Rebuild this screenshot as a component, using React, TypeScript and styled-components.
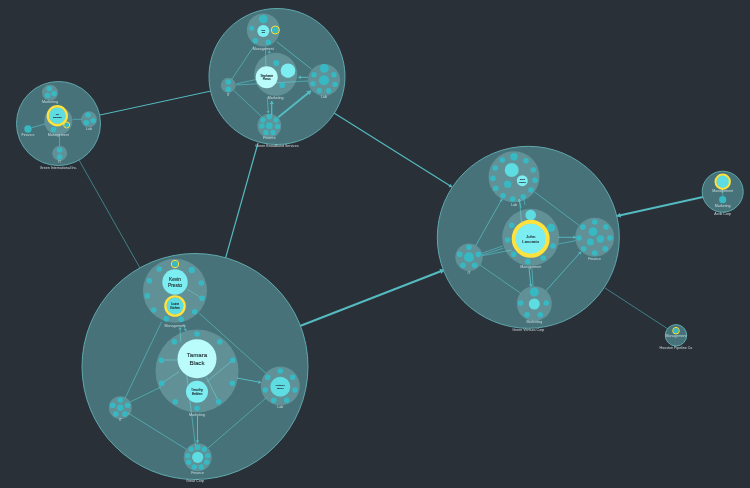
import styled, {createGlobalStyle} from 'styled-components';

const GlobalStyle = createGlobalStyle`
    html, body {
        margin: 0;
        background-color: #2A3038;
    }
`

const Page = styled.div`
    width: 750px;
    height: 488px;
    overflow: hidden;
    background-color: #2A3038;
`

const Chart = styled.svg`
    display: block;
    width: 750px;
    height: 488px;
    filter: blur(0.35px);
    font-family: "Liberation Sans", Arial, sans-serif;
`

const ClusterCircle = styled.circle`
    fill: #47727A;
    stroke: #5FA9AD;
    stroke-width: 1;
`

const GroupCircle = styled.circle`
    fill: #A6E4E2;
    fill-opacity: 0.28;
`

const Node = styled.circle<{$tone: Tone}>`
    fill: ${({$tone}) => toneColors[$tone]};
`

const Ring = styled.circle<{$width: number}>`
    fill: none;
    stroke: #FFE23D;
    stroke-width: ${({$width}) => $width};
`

const Link = styled.line<{$width: number, $dim?: boolean}>`
    stroke: ${({$dim}) => $dim ? '#3E8086' : '#54BBC0'};
    stroke-width: ${({$width}) => $width};
`

const Arrow = styled.polygon<{$dim?: boolean}>`
    fill: ${({$dim}) => $dim ? '#3E8086' : '#54BBC0'};
`

const Label = styled.text<{$size?: number}>`
    fill: #C9DEDE;
    font-size: ${({$size}) => $size ?? 3.6}px;
    text-anchor: middle;
`

const NodeName = styled.text<{$size: number}>`
    fill: #1E2B30;
    stroke: #1E2B30;
    stroke-width: 0.12;
    font-size: ${({$size}) => $size}px;
    text-anchor: middle;
`

type Tone = 'small' | 'mid' | 'bright' | 'pale'
type Point = [number, number]

const toneColors: Record<Tone, string> = {
    small: '#37B9C4',
    mid: '#5DDCE2',
    bright: '#7CEDF1',
    pale: '#BAFCFC',
}

interface DotProps {
    at: Point
    r?: number
    tone?: Tone
    ring?: number
    ringR?: number
    name?: string[]
    nameSize?: number
}

interface GroupProps {
    at: Point
    r: number
    label: string
    labelY: number
    dots: DotProps[]
}

interface ClusterProps {
    at: Point
    r: number
    label: string
    labelY: number
    links: LinkProps[]
    groups: GroupProps[]
}

interface LinkProps {
    from: Point
    to: Point
    width?: number
    arrow?: boolean
    dim?: boolean
}

const small = (points: Point[], r = 2.8): DotProps[] => points.map(at => ({at, r}))

const clusters: ClusterProps[] = [
    {
        at: [58.5, 123.5], r: 42, label: 'Green International Inc.', labelY: 169,
        links: [
            {from: [31.7, 127.7], to: [45, 124], width: 0.7},
            {from: [72.7, 119.3], to: [81.7, 119.3], width: 0.7},
            {from: [59.5, 135], to: [59.5, 146], width: 0.7},
        ],
        groups: [
            {at: [50, 92.7], r: 8, label: 'Marketing', labelY: 103, dots: small([[49.3, 88.7], [54, 93.7], [47.5, 95.5]])},
            {
                at: [58.3, 121], r: 14, label: 'Management', labelY: 136.2, dots: [
                    {at: [53.5, 129.5], r: 2.8},
                    {at: [57.3, 115.7], r: 8.4, tone: 'mid', ring: 2.4, ringR: 9.5, name: ['Jim', 'Schwieger'], nameSize: 1.9},
                    {at: [66.7, 125], r: 2.6, ring: 0.9, ringR: 3},
                ],
            },
            {at: [89, 119.3], r: 8, label: 'Lab', labelY: 130, dots: small([[88, 115], [93.3, 120.7], [86.3, 122.7]])},
            {at: [28, 129], r: 0, label: 'Finance', labelY: 136, dots: [{at: [28, 129], r: 3.7}]},
            {at: [59.7, 153.3], r: 7.5, label: 'IT', labelY: 163, dots: small([[59.7, 150], [59.7, 157]])},
        ],
    },
    {
        at: [277, 76.5], r: 68, label: 'Green Broadband Services', labelY: 147,
        links: [
            {from: [276.7, 41.7], to: [311.7, 69.3], width: 0.8},
            {from: [254, 46], to: [231.7, 79.3], width: 0.7},
            {from: [234, 90.7], to: [261.7, 116.7], width: 0.7},
            {from: [236, 84], to: [257, 79.3], width: 0.7},
            {from: [236, 85], to: [308, 81], width: 0.7},
            {from: [308, 77.3], to: [298.3, 77.3], width: 1, arrow: true},
            {from: [278.3, 117.3], to: [311, 90.7], width: 2, arrow: true},
            {from: [271.7, 115], to: [271.7, 101], width: 1.3, arrow: true},
            {from: [267.3, 97], to: [268.3, 113.3], width: 0.7, arrow: true},
            {from: [265.5, 46.7], to: [265.8, 66.7], width: 0.7},
            {from: [269.3, 53.3], to: [269.3, 50.7], width: 0.7, arrow: true},
        ],
        groups: [
            {
                at: [263.3, 30], r: 16.5, label: 'Management', labelY: 50, dots: [
                    {at: [263.3, 19], r: 4.3},
                    {at: [251.7, 28.3], r: 2.5},
                    {at: [263.3, 31], r: 6, tone: 'bright', name: ['Carol', 'Clair'], nameSize: 1.6},
                    {at: [275.3, 30], r: 3.2, ring: 1, ringR: 4},
                    {at: [255.3, 40.7], r: 2.8},
                    {at: [268.3, 42.3], r: 2.8},
                ],
            },
            {
                at: [275.7, 74.3], r: 21.5, label: 'Marketing', labelY: 99, dots: [
                    {at: [276.3, 63], r: 3},
                    {at: [282.3, 85.3], r: 2.8},
                    {at: [288, 70.7], r: 7.3, tone: 'bright'},
                    {at: [266.7, 77.3], r: 11, tone: 'pale', name: ['Stephanie', 'Panus'], nameSize: 2.8},
                ],
            },
            {
                at: [324, 80], r: 16, label: 'Lab', labelY: 98, dots: [
                    {at: [324.3, 68.3], r: 4.4},
                    {at: [324, 80.3], r: 5},
                    ...small([[314, 74.7], [334, 74.7], [313, 83.7], [335, 84.3], [319.3, 90.7], [328.7, 90.7]], 2.6),
                ],
            },
            {at: [228.3, 85.3], r: 7.5, label: 'IT', labelY: 96, dots: small([[228.3, 82], [228.3, 89.3]])},
            {
                at: [269.3, 125.7], r: 12, label: 'Finance', labelY: 139, dots: [
                    {at: [269.3, 125.7], r: 3.4},
                    ...small([[269.3, 116.7], [263, 120], [276, 120], [262, 126], [277.5, 126.5], [266, 132.5], [273, 132.5]], 2.7),
                ],
            },
        ],
    },
    {
        at: [195, 366.5], r: 113, label: 'Great Corp', labelY: 482,
        links: [
            {from: [161.7, 321.7], to: [125, 398.3], width: 0.7},
            {from: [199.3, 313.3], to: [266, 373.3], width: 0.7},
            {from: [128, 413], to: [186, 449], width: 0.7},
            {from: [208, 448], to: [266, 398], width: 0.7},
            {from: [130, 402], to: [161, 387], width: 0.7},
            {from: [237, 378], to: [261, 382.5], width: 1, arrow: true},
            {from: [196, 450], to: [186.7, 375], width: 0.7},
            {from: [197.5, 416], to: [197.5, 443], width: 1, arrow: true},
            {from: [180, 360], to: [162, 360], width: 0.7},
            {from: [179, 371.7], to: [161.7, 383.3], width: 0.7},
            {from: [206, 376.7], to: [218.7, 401.7], width: 0.7},
            {from: [206.7, 381.7], to: [232.7, 360.3], width: 0.7},
            {from: [180.7, 341.7], to: [180, 327.3], width: 0.7, arrow: true},
            {from: [187.3, 289.3], to: [202, 298.3], width: 0.6},
            {from: [183, 324], to: [186, 331], width: 0.7, arrow: true},
        ],
        groups: [
            {
                at: [175, 290.7], r: 32, label: 'Management', labelY: 327, dots: [
                    ...small([[159.3, 269], [149.3, 280.7], [201.3, 283], [147.3, 295.7], [202, 298.3], [153.7, 310], [194.7, 311.7], [166.3, 318.7], [181.3, 319.3]]),
                    {at: [191.7, 270], r: 3.2},
                    {at: [175, 264], r: 3, ring: 1, ringR: 3.7},
                    {at: [175, 282], r: 12.7, tone: 'bright', name: ['Kevin', 'Presto'], nameSize: 4.8},
                    {at: [175, 306], r: 8.6, tone: 'mid', ring: 2.4, ringR: 9.6, name: ['Louise', 'Kitchen'], nameSize: 2.8},
                ],
            },
            {
                at: [197, 371], r: 41.5, label: 'Marketing', labelY: 415.5, dots: [
                    ...small([[197, 334], [174.3, 341.7], [219.7, 341.7], [161.3, 360.3], [232.7, 360.3], [161.7, 383.3], [232.3, 383.3], [175.3, 401.7], [218.7, 401.7], [197, 408.3]]),
                    {at: [197, 358.7], r: 19.5, tone: 'pale', name: ['Tamara', 'Black'], nameSize: 6.2},
                    {at: [197, 391.7], r: 11, tone: 'bright', name: ['Timothy', 'Belden'], nameSize: 3.4},
                ],
            },
            {
                at: [280.3, 386], r: 19.5, label: 'Lab', labelY: 408, dots: [
                    ...small([[280.3, 371], [267.7, 377.3], [292.7, 377.3], [265.3, 390], [295, 390], [273.7, 400.3], [286.7, 400.3]]),
                    {at: [280.3, 386.7], r: 10, tone: 'mid', name: ['Fletcher', 'Sturm'], nameSize: 2.5},
                ],
            },
            {
                at: [120.3, 407.7], r: 11.5, label: 'IT', labelY: 421, dots: [
                    ...small([[120.3, 400], [112.7, 405.3], [127.7, 405.3], [115.7, 414], [125, 414]]),
                    {at: [120.3, 407.7], r: 3.2},
                ],
            },
            {
                at: [197.7, 457.3], r: 14, label: 'Finance', labelY: 474, dots: [
                    {at: [197.7, 457.3], r: 5.6, tone: 'mid'},
                    ...small([[197.7, 447.3], [191.3, 449.3], [204.3, 449.3], [187.7, 455.7], [207.7, 455.7], [188.7, 462.3], [206.7, 462.3], [194.3, 467], [201.3, 467]], 2.7),
                ],
            },
        ],
    },
    {
        at: [528.3, 237.3], r: 91, label: 'Green Ventura Corp', labelY: 331,
        links: [
            {from: [475.7, 245.7], to: [502, 199], width: 0.8, arrow: true},
            {from: [535, 192.3], to: [579, 225.3], width: 0.7},
            {from: [481.7, 253.3], to: [502.7, 246], width: 0.7},
            {from: [482, 255], to: [503.3, 248.3], width: 0.7},
            {from: [482.3, 255.7], to: [511.7, 250], width: 0.7},
            {from: [480, 265], to: [520.7, 293.3], width: 0.7},
            {from: [546, 290.7], to: [581, 251.7], width: 0.9, arrow: true},
            {from: [558.3, 237.3], to: [575.7, 237.3], width: 0.9, arrow: true},
            {from: [558.3, 244], to: [575.7, 240.7], width: 0.7},
            {from: [529, 268.3], to: [531, 286.7], width: 1, arrow: true},
            {from: [532, 268.3], to: [533, 286], width: 0.7},
            {from: [521, 208], to: [519, 199], width: 1, arrow: true},
            {from: [525, 205], to: [523, 195], width: 0.7},
            {from: [519.5, 200], to: [521.5, 222], width: 0.7},
        ],
        groups: [
            {
                at: [514, 176.7], r: 25.5, label: 'Lab', labelY: 206, dots: [
                    ...small([[502.3, 160], [526, 160.7], [495.3, 168], [533.3, 170], [493, 178.3], [535, 180.3], [495.7, 188.3], [531, 190], [503, 195.7], [523.3, 196.7], [512.7, 199]]),
                    {at: [514, 156.7], r: 3.7},
                    {at: [507.7, 184.3], r: 3.7},
                    {at: [511.7, 170], r: 7, tone: 'mid'},
                    {at: [522.3, 180.7], r: 5.5, tone: 'bright', name: ['Grant', 'Masson'], nameSize: 2.1},
                ],
            },
            {
                at: [530.7, 237.3], r: 28.5, label: 'Management', labelY: 268, dots: [
                    {at: [511.7, 225.3], r: 2.8},
                    {at: [551, 227.7], r: 4},
                    {at: [507.7, 240], r: 2.8},
                    {at: [553, 246], r: 2.8},
                    {at: [513.7, 254.3], r: 2.8},
                    {at: [543.3, 258], r: 2.8},
                    {at: [527.7, 261.7], r: 2.8},
                    {at: [530.7, 215], r: 5.3, tone: 'mid'},
                    {at: [530.7, 238.7], r: 15.5, tone: 'bright', ring: 4, ringR: 17, name: ['John', 'Lavorato'], nameSize: 4.3},
                ],
            },
            {
                at: [594.7, 237.3], r: 19.5, label: 'Finance', labelY: 259.5, dots: [
                    ...small([[594.7, 222], [583, 227], [606, 227], [579, 238], [610, 238], [583.7, 248.7], [605.3, 248.7], [594.7, 253]]),
                    {at: [593, 231.7], r: 4.4},
                    {at: [600.3, 239], r: 3.7},
                    {at: [590.3, 242], r: 3.5},
                ],
            },
            {
                at: [469, 257.3], r: 13.7, label: 'IT', labelY: 273.5, dots: [
                    ...small([[469, 247.3], [459.7, 254.3], [478.3, 254.3], [463, 265.3], [474.7, 265.3]]),
                    {at: [469, 257.3], r: 5},
                ],
            },
            {
                at: [534.3, 303.7], r: 17.5, label: 'Marketing', labelY: 323, dots: [
                    {at: [534.3, 292], r: 4.5},
                    {at: [534.3, 304], r: 5.5, tone: 'mid'},
                    ...small([[520.7, 303], [546.3, 303], [527, 314.7], [540.3, 314.7]]),
                ],
            },
        ],
    },
    {
        at: [722.7, 191.7], r: 20.5, label: 'Arvik Corp', labelY: 215,
        links: [{from: [722.7, 189], to: [722.7, 197], width: 0.6}],
        groups: [
            {at: [722.7, 181.7], r: 0, label: 'Management', labelY: 192, dots: [{at: [722.7, 181.7], r: 6.6, tone: 'mid', ring: 2, ringR: 7.2}]},
            {at: [722.7, 199.7], r: 0, label: 'Marketing', labelY: 206.5, dots: [{at: [722.7, 199.7], r: 3.6}]},
        ],
    },
    {
        at: [676, 335.3], r: 10.7, label: 'Houston Pipeline Co', labelY: 349,
        links: [],
        groups: [
            {at: [676, 330.7], r: 0, label: 'Management', labelY: 337, dots: [{at: [676, 330.7], r: 2.7, ring: 1, ringR: 3.3}]},
        ],
    },
]

const outerLinks: LinkProps[] = [
    {from: [100, 115], to: [211, 91], width: 1},
    {from: [334, 113], to: [452, 187], width: 1.2, arrow: true},
    {from: [258, 143], to: [225, 260], width: 1.2},
    {from: [79, 160], to: [140, 268], width: 1, dim: true},
    {from: [300, 326], to: [444, 270], width: 2, arrow: true},
    {from: [703, 197], to: [617, 216], width: 1.8, arrow: true},
    {from: [605, 288], to: [668, 329], width: 1, dim: true},
]

function Edge({from, to, width = 0.7, arrow, dim}: LinkProps) {
    const angle = Math.atan2(to[1] - from[1], to[0] - from[0])
    const size = width * 1.3 + 1.2
    const side = size * 0.75
    const tip = `${to[0]},${to[1]}`
    const baseX = to[0] - Math.cos(angle) * size
    const baseY = to[1] - Math.sin(angle) * size
    const left = `${baseX - Math.sin(angle) * side},${baseY + Math.cos(angle) * side}`
    const right = `${baseX + Math.sin(angle) * side},${baseY - Math.cos(angle) * side}`

    return (
        <>
            <Link x1={from[0]} y1={from[1]} x2={to[0]} y2={to[1]} $width={width} $dim={dim}/>
            {arrow && <Arrow points={`${tip} ${left} ${right}`} $dim={dim}/>}
        </>
    )
}

function Dot({at, r = 2.8, tone = 'small', ring, ringR, name, nameSize = 3}: DotProps) {
    const firstLine = at[1] - nameSize * 0.2
    return (
        <>
            <Node cx={at[0]} cy={at[1]} r={r} $tone={tone}/>
            {ring && <Ring cx={at[0]} cy={at[1]} r={ringR} $width={ring}/>}
            {name && name.map((line, index) => (
                <NodeName key={line} x={at[0]} y={firstLine + index * nameSize * 1.15} $size={nameSize}>{line}</NodeName>
            ))}
        </>
    )
}

function Group({at, r, label, labelY, dots}: GroupProps) {
    return (
        <>
            {r > 0 && <GroupCircle cx={at[0]} cy={at[1]} r={r}/>}
            {dots.map(dot => <Dot key={dot.at.join()} {...dot}/>)}
            <Label x={at[0]} y={labelY}>{label}</Label>
        </>
    )
}

function Cluster({at, r, label, labelY, links, groups}: ClusterProps) {
    return (
        <g>
            <ClusterCircle cx={at[0]} cy={at[1]} r={r}/>
            {links.map(link => <Edge key={`${link.from}-${link.to}`} {...link}/>)}
            {groups.map(group => <Group key={group.label} {...group}/>)}
            <Label x={at[0]} y={labelY}>{label}</Label>
        </g>
    )
}

export default function App() {
    return (
        <Page>
            <GlobalStyle/>
            <Chart viewBox="0 0 750 488">
                {outerLinks.map(link => <Edge key={`${link.from}-${link.to}`} {...link}/>)}
                {clusters.map(cluster => <Cluster key={cluster.label} {...cluster}/>)}
            </Chart>
        </Page>
    )
}
